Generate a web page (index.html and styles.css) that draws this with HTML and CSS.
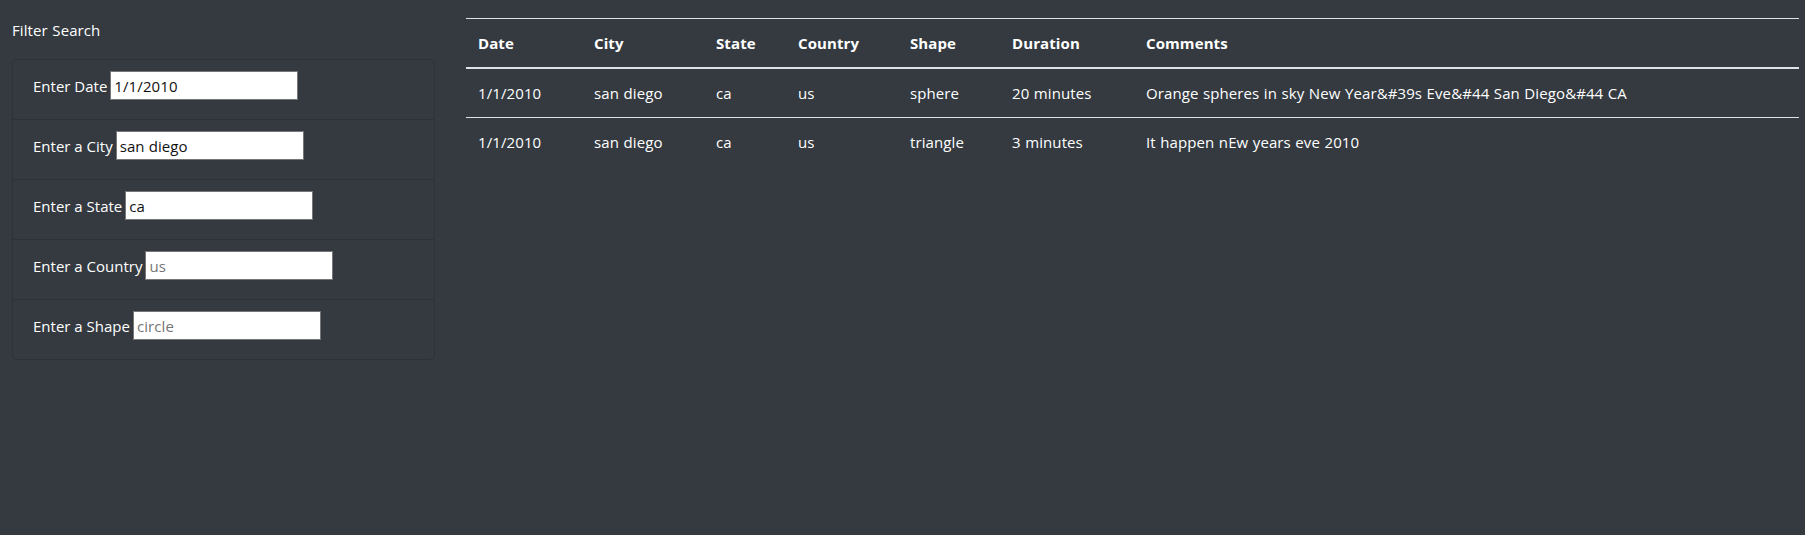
FILE: index.html
```html
<!DOCTYPE html>
<html lang="en">
<head>
<meta charset="utf-8">
<title>UFO Sightings</title>
<link rel="stylesheet" href="styles.css">
</head>
<body>
<div class="page">
  <aside class="filters">
    <div class="filters-title">Filter Search</div>
    <ul class="filter-list">
      <li class="filter-item"><label for="datetime">Enter Date</label><input id="datetime" class="filter-input" type="text" value="1/1/2010"></li>
      <li class="filter-item"><label for="city">Enter a City</label><input id="city" class="filter-input" type="text" value="san diego"></li>
      <li class="filter-item"><label for="state">Enter a State</label><input id="state" class="filter-input" type="text" value="ca"></li>
      <li class="filter-item"><label for="country">Enter a Country</label><input id="country" class="filter-input" type="text" placeholder="us"></li>
      <li class="filter-item"><label for="shape">Enter a Shape</label><input id="shape" class="filter-input" type="text" placeholder="circle"></li>
    </ul>
  </aside>
  <main class="results">
    <table class="ufo-table">
      <colgroup>
        <col class="c-date"><col class="c-city"><col class="c-state"><col class="c-country"><col class="c-shape"><col class="c-duration"><col class="c-comments">
      </colgroup>
      <thead>
        <tr><th>Date</th><th>City</th><th>State</th><th>Country</th><th>Shape</th><th>Duration</th><th>Comments</th></tr>
      </thead>
      <tbody>
        <tr><td>1/1/2010</td><td>san diego</td><td>ca</td><td>us</td><td>sphere</td><td>20 minutes</td><td>Orange spheres in sky New Year&amp;#39s Eve&amp;#44 San Diego&amp;#44 CA</td></tr>
        <tr><td>1/1/2010</td><td>san diego</td><td>ca</td><td>us</td><td>triangle</td><td>3 minutes</td><td>It happen nEw years eve 2010</td></tr>
      </tbody>
    </table>
  </main>
</div>
</body>
</html>
```
FILE: styles.css
```css
html, body {
  margin: 0;
  padding: 0;
  background: #343a40;
}
body {
  color: #ffffff;
  font-family: "Open Sans", "Liberation Sans", sans-serif;
  font-size: 15px;
  line-height: 24px;
  letter-spacing: 0.1px;
  word-spacing: 0.5px;
  min-height: 535px;
}
.page {
  display: grid;
  grid-template-columns: 423px 1333px;
  column-gap: 31px;
  padding-left: 12px;
  align-items: start;
}
.filters-title {
  margin-top: 18px;
  height: 24px;
  margin-bottom: 17px;
}
.filter-list {
  list-style: none;
  margin: 0;
  padding: 0;
  border: 1px solid #2e3338;
  border-radius: 4px;
}
.filter-item {
  display: flex;
  align-items: baseline;
  padding: 11px 20px 19px 20px;
  border-bottom: 1px solid #2e3338;
}
.filter-item:last-child {
  border-bottom: 0;
}
.filter-item label {
  margin-right: 3px;
  letter-spacing: 0;
  word-spacing: 0;
  white-space: nowrap;
}
.filter-input {
  box-sizing: border-box;
  width: 188px;
  height: 29px;
  padding: 0 3px;
  margin: 0;
  border: 1px solid #767676;
  border-radius: 0;
  background: #ffffff;
  color: #111111;
  font-family: "Open Sans", "Liberation Sans", sans-serif;
  font-size: 15px;
  letter-spacing: 0.1px;
  outline: none;
}
.filter-input::placeholder {
  color: #757575;
}
.results {
  padding-top: 18px;
}
.ufo-table {
  width: 1333px;
  border-collapse: collapse;
  table-layout: fixed;
  color: #ffffff;
}
.c-date { width: 116px; }
.c-city { width: 122px; }
.c-state { width: 82px; }
.c-country { width: 112px; }
.c-shape { width: 102px; }
.c-duration { width: 134px; }
.ufo-table th,
.ufo-table td {
  padding: 12px;
  text-align: left;
  vertical-align: top;
  border-top: 1px solid #dee2e6;
  white-space: nowrap;
}
.ufo-table th {
  font-weight: 700;
  border-bottom: 2px solid #dee2e6;
}
```
